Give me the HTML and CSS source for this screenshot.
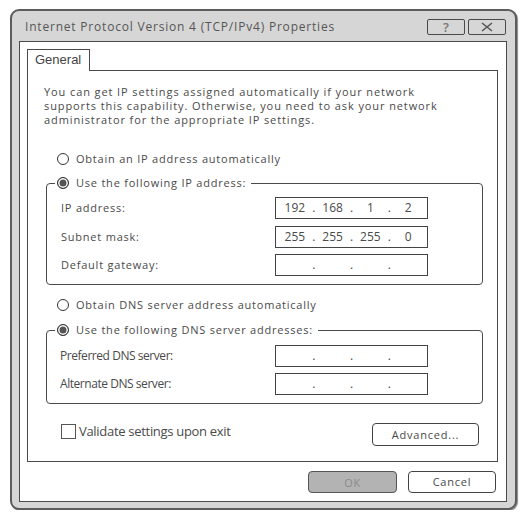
FILE: index.html
```html
<!DOCTYPE html>
<html>
<head>
<meta charset="utf-8">
<link rel="stylesheet" href="styles.css">
</head>
<body>
<div class="window">
  <div class="titlebar">
    <div class="title">Internet Protocol Version 4 (TCP/IPv4) Properties</div>
    <div class="tbtns">
      <div class="tbtn">?</div>
      <div class="tbtn">
        <svg width="14" height="10" viewBox="0 0 14 10"><path d="M2 1 L12 9 M12 1 L2 9" stroke="#555" stroke-width="1.6" fill="none"/></svg>
      </div>
    </div>
  </div>
  <div class="client">
    <div class="tabs"><div class="tab">General</div></div>
    <div class="panel">
      <p class="desc">You can get IP settings assigned automatically if your network<br>supports this capability. Otherwise, you need to ask your network<br>administrator for the appropriate IP settings.</p>

      <div class="radio-row first"><span class="radio"></span><span class="sp">Obtain an IP address automatically</span></div>

      <fieldset class="group g1">
        <legend><span class="radio checked"></span><span class="sp">Use the following IP address:</span></legend>
        <div class="grid">
          <div class="lbl sp">IP address:</div>
          <div class="ip"><span>192</span><i>.</i><span>168</span><i>.</i><span>1</span><i>.</i><span>2</span></div>
          <div class="lbl sp">Subnet mask:</div>
          <div class="ip"><span>255</span><i>.</i><span>255</span><i>.</i><span>255</span><i>.</i><span>0</span></div>
          <div class="lbl sp">Default gateway:</div>
          <div class="ip"><span></span><i>.</i><span></span><i>.</i><span></span><i>.</i><span></span></div>
        </div>
      </fieldset>

      <div class="radio-row second"><span class="radio"></span><span class="sp">Obtain DNS server address automatically</span></div>

      <fieldset class="group g2">
        <legend><span class="radio checked"></span><span class="sp">Use the following DNS server addresses:</span></legend>
        <div class="grid">
          <div class="lbl plain">Preferred DNS server:</div>
          <div class="ip"><span></span><i>.</i><span></span><i>.</i><span></span><i>.</i><span></span></div>
          <div class="lbl plain">Alternate DNS server:</div>
          <div class="ip"><span></span><i>.</i><span></span><i>.</i><span></span><i>.</i><span></span></div>
        </div>
      </fieldset>

      <div class="check-row">
        <label class="check"><span class="box"></span><span class="plain big">Validate settings upon exit</span></label>
        <div class="btn adv sp">Advanced...</div>
      </div>
    </div>
    <div class="actions">
      <div class="btn ok">OK</div>
      <div class="btn cancel sp">Cancel</div>
    </div>
  </div>
</div>
</body>
</html>
```

FILE: styles.css
```css
* { box-sizing: border-box; }
html, body { margin: 0; padding: 0; background: #ffffff; }
body { padding: 9px 0 0 10px; font-family: "Open Sans", "DejaVu Sans", sans-serif; color: #4a4a4a; }

.sp { font-family: "Open Sans", sans-serif; font-size: 11px; letter-spacing: 0.78px; line-height: 14px; color: #4a4a4a; }
.plain { font-family: "Open Sans", sans-serif; font-size: 12px; letter-spacing: -0.45px; color: #4a4a4a; }
.plain.big { font-size: 13px; letter-spacing: -0.3px; }

.window {
  width: 507px;
  height: 501px;
  border: 2px solid #5c5c5c;
  border-radius: 9px;
  background: #d6d6d6;
  box-shadow: 1px 1px 1px #8a8a8a;
  display: flex;
  flex-direction: column;
  padding: 0 8px 6px 7px;
}

.titlebar {
  height: 30px;
  display: flex;
  justify-content: space-between;
  align-items: flex-start;
  padding: 8px 1px 0 6px;
}
.title { font-size: 12px; letter-spacing: 0.8px; color: #555; line-height: 16px; }
.tbtns { display: flex; gap: 3px; }
.tbtn {
  width: 38px; height: 16px;
  border: 1px solid #4a4a4a;
  border-radius: 2px;
  background: #d6d6d6;
  display: flex; align-items: center; justify-content: center;
  font-size: 13px; font-weight: 600; color: #777; line-height: 14px;
}

.client {
  flex: 1;
  background: #fff;
  border: 1px solid #4a4a4a;
  padding: 7px 8px 0 7px;
  display: flex;
  flex-direction: column;
}

.tabs { display: flex; }
.tab {
  position: relative;
  z-index: 1;
  width: 63px;
  height: 22px;
  margin-bottom: -1px;
  border: 1px solid #4a4a4a;
  border-bottom: none;
  background: #fff;
  padding-left: 7px;
  font-family: "Liberation Sans", Arial, sans-serif;
  font-size: 13px;
  line-height: 20px;
  color: #444;
}

.panel {
  height: 392px;
  border: 1px solid #4a4a4a;
  padding: 14px 0 0 16px;
  display: flex;
  flex-direction: column;
}

.desc {
  margin: 0;
  font-size: 11px;
  letter-spacing: 0.9px;
  line-height: 14px;
  white-space: nowrap;
  color: #4a4a4a;
}

.radio-row { display: flex; align-items: center; height: 14px; margin-left: 13px; gap: 7px; }
.radio-row.first { margin-top: 25px; }
.radio-row.second { margin-top: 13px; }

.radio {
  width: 12px; height: 12px;
  border: 1.7px solid #333;
  border-radius: 50%;
  background: #fff;
  flex: none;
  display: inline-block;
}
.radio.checked { background: #555; box-shadow: inset 0 0 0 1.5px #fff; }

.group {
  margin: 10px 0 0 2px;
  width: 437px;
  border: 1px solid #4a4a4a;
  border-radius: 4px;
  padding: 7px 14px 8px 14px;
  min-width: 0;
}
.g2 { margin-top: 11px; padding-top: 8px; }
.group legend {
  display: flex;
  align-items: center;
  gap: 7px;
  height: 14px;
  margin-left: -6px;
  padding: 0 5px 0 2px;
}

.grid {
  display: grid;
  grid-template-columns: 214px 153px;
  row-gap: 6.5px;
  align-items: center;
}
.g2 .grid { row-gap: 6px; }
.lbl { line-height: 14px; }
.lbl.plain { margin-left: -1px; }

.ip {
  height: 22px;
  border: 1px solid #444;
  display: grid;
  grid-template-columns: 1fr 0 1fr 0 1fr 0 1fr;
  align-items: center;
  font-family: "Open Sans", sans-serif;
  font-size: 12px;
  color: #4a4a4a;
  line-height: 20px;
}
.ip span { text-align: center; }
.ip i { font-style: normal; display: flex; justify-content: center; width: 0; overflow: visible; font-size: 12px; }

.check-row {
  margin-top: 19px;
  margin-left: 17px;
  margin-right: 18px;
  display: flex;
  justify-content: space-between;
  align-items: center;
}
.check { display: flex; align-items: center; gap: 3px; margin-top: -7px; }
.box { width: 15px; height: 15px; border: 1px solid #555; background: #fff; display: inline-block; }

.btn {
  height: 23px;
  border: 1px solid #444;
  border-radius: 4px;
  background: #fff;
  display: flex; align-items: center; justify-content: center;
}
.adv { width: 107px; }

.actions {
  display: flex;
  justify-content: flex-end;
  gap: 11px;
  margin-top: 9px;
  margin-right: 2px;
}
.actions .btn { height: 22px; }
.ok { width: 89px; background: #b3b3b3; border-color: #555; color: #8a8a8a; font-size: 11px; letter-spacing: 0.5px; }
.cancel { width: 88px; }
```
